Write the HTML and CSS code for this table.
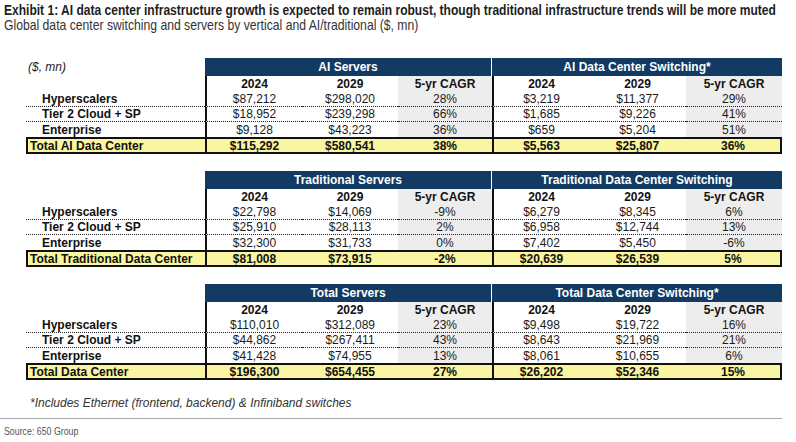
FILE: index.html
```html
<!DOCTYPE html>
<html>
<head>
<meta charset="utf-8">
<link rel="stylesheet" href="styles.css">
</head>
<body>
<div class="page">
  <div class="title">Exhibit 1: AI data center infrastructure growth is expected to remain robust, though traditional infrastructure trends will be more muted</div>
  <div class="subtitle">Global data center switching and servers by vertical and AI/traditional ($, mn)</div>

  <div class="tables">
    <div class="tbl">
      <div class="unit">($, mn)</div>
      <div class="hd hd1">AI Servers</div>
      <div class="hd hd2">AI Data Center Switching*</div>

      <div class="yr lab"></div>
      <div class="yr sep">2024</div><div class="yr">2029</div><div class="yr g">5-yr CAGR</div>
      <div class="yr sep">2024</div><div class="yr">2029</div><div class="yr g">5-yr CAGR</div>

      <div class="row dot lab">Hyperscalers</div>
      <div class="row dot sep">$87,212</div><div class="row dot">$298,020</div><div class="row dot g">28%</div>
      <div class="row dot sep">$3,219</div><div class="row dot">$11,377</div><div class="row dot g">29%</div>

      <div class="row dot lab sm">Tier 2 Cloud + SP</div>
      <div class="row dot sep sm">$18,952</div><div class="row dot sm">$239,298</div><div class="row dot g sm">66%</div>
      <div class="row dot sep sm">$1,685</div><div class="row dot sm">$9,226</div><div class="row dot g sm">41%</div>

      <div class="row lab">Enterprise</div>
      <div class="row sep">$9,128</div><div class="row">$43,223</div><div class="row g">36%</div>
      <div class="row sep">$659</div><div class="row">$5,204</div><div class="row g">51%</div>

      <div class="tot first">Total AI Data Center</div>
      <div class="tot sep">$115,292</div><div class="tot">$580,541</div><div class="tot">38%</div>
      <div class="tot sep">$5,563</div><div class="tot">$25,807</div><div class="tot last">36%</div>
    </div>

    <div class="tbl">
      <div class="unit"></div>
      <div class="hd hd1">Traditional Servers</div>
      <div class="hd hd2">Traditional Data Center Switching</div>

      <div class="yr lab"></div>
      <div class="yr sep">2024</div><div class="yr">2029</div><div class="yr g">5-yr CAGR</div>
      <div class="yr sep">2024</div><div class="yr">2029</div><div class="yr g">5-yr CAGR</div>

      <div class="row dot lab">Hyperscalers</div>
      <div class="row dot sep">$22,798</div><div class="row dot">$14,069</div><div class="row dot g">-9%</div>
      <div class="row dot sep">$6,279</div><div class="row dot">$8,345</div><div class="row dot g">6%</div>

      <div class="row dot lab sm">Tier 2 Cloud + SP</div>
      <div class="row dot sep sm">$25,910</div><div class="row dot sm">$28,113</div><div class="row dot g sm">2%</div>
      <div class="row dot sep sm">$6,958</div><div class="row dot sm">$12,744</div><div class="row dot g sm">13%</div>

      <div class="row lab">Enterprise</div>
      <div class="row sep">$32,300</div><div class="row">$31,733</div><div class="row g">0%</div>
      <div class="row sep">$7,402</div><div class="row">$5,450</div><div class="row g">-6%</div>

      <div class="tot first">Total Traditional Data Center</div>
      <div class="tot sep">$81,008</div><div class="tot">$73,915</div><div class="tot">-2%</div>
      <div class="tot sep">$20,639</div><div class="tot">$26,539</div><div class="tot last">5%</div>
    </div>

    <div class="tbl">
      <div class="unit"></div>
      <div class="hd hd1">Total Servers</div>
      <div class="hd hd2">Total Data Center Switching*</div>

      <div class="yr lab"></div>
      <div class="yr sep">2024</div><div class="yr">2029</div><div class="yr g">5-yr CAGR</div>
      <div class="yr sep">2024</div><div class="yr">2029</div><div class="yr g">5-yr CAGR</div>

      <div class="row dot lab">Hyperscalers</div>
      <div class="row dot sep">$110,010</div><div class="row dot">$312,089</div><div class="row dot g">23%</div>
      <div class="row dot sep">$9,498</div><div class="row dot">$19,722</div><div class="row dot g">16%</div>

      <div class="row dot lab sm">Tier 2 Cloud + SP</div>
      <div class="row dot sep sm">$44,862</div><div class="row dot sm">$267,411</div><div class="row dot g sm">43%</div>
      <div class="row dot sep sm">$8,643</div><div class="row dot sm">$21,969</div><div class="row dot g sm">21%</div>

      <div class="row lab">Enterprise</div>
      <div class="row sep">$41,428</div><div class="row">$74,955</div><div class="row g">13%</div>
      <div class="row sep">$8,061</div><div class="row">$10,655</div><div class="row g">6%</div>

      <div class="tot first">Total Data Center</div>
      <div class="tot sep">$196,300</div><div class="tot">$654,455</div><div class="tot">27%</div>
      <div class="tot sep">$26,202</div><div class="tot">$52,346</div><div class="tot last">15%</div>
    </div>
  </div>

  <div class="note">*Includes Ethernet (frontend, backend) &amp; Infiniband switches</div>
  <div class="rule"></div>
  <div class="source">Source: 650 Group</div>
</div>
</body>
</html>
```

FILE: styles.css
```css
html, body {
  margin: 0;
  padding: 0;
  background: #ffffff;
}

.page {
  width: 796px;
  height: 442px;
  overflow: hidden;
  font-family: "Liberation Sans", Arial, sans-serif;
  color: #222;
}

.title {
  margin-top: 3px;
  margin-left: 4px;
  font-family: "Liberation Sans", Arial, sans-serif;
  font-weight: bold;
  font-size: 14.5px;
  line-height: 15px;
  color: #1e1e1e;
  white-space: nowrap;
  transform: scaleX(0.83);
  transform-origin: 0 0;
}

.subtitle {
  margin-left: 4px;
  font-family: "Liberation Sans", Arial, sans-serif;
  font-size: 14.5px;
  line-height: 15px;
  color: #333;
  white-space: nowrap;
  transform: scaleX(0.84);
  transform-origin: 0 0;
}

.tables {
  margin-top: 25px;
  margin-left: 26px;
  display: flex;
  flex-direction: column;
  gap: 17px;
}

.tbl {
  display: grid;
  grid-template-columns: 179px 97px 96px 94px 97px 97px 96px;
  grid-template-rows: 18px 15px 16px 15px 15px 17px;
  width: 756px;
  font-size: 12px;
}

.tbl > div {
  box-sizing: border-box;
  display: flex;
  align-items: center;
  justify-content: center;
  white-space: nowrap;
  color: #1a1a1a;
}

.unit {
  justify-content: flex-start !important;
  padding-left: 2px;
  font-style: italic;
}

.hd {
  background: #123a63;
  color: #ffffff !important;
  font-weight: bold;
}

.hd1 {
  grid-column: 2 / span 3;
  border-right: 1px solid #ffffff;
}

.hd2 {
  grid-column: 5 / span 3;
}

.yr {
  font-weight: bold;
  color: #111 !important;
}

.lab {
  justify-content: flex-start !important;
  padding-left: 16px;
  font-weight: bold;
  color: #111 !important;
}

.sep {
  border-left: 2px solid #111;
}

.g {
  background: #ededed;
}

.dot {
  border-bottom: 1px dotted #222;
}

.tot {
  background: #f9f5a1;
  border-top: 2px solid #111;
  border-bottom: 2px solid #111;
  font-weight: bold;
  color: #111 !important;
}

.tot.first {
  justify-content: flex-start;
  border-left: 2px solid #111;
  padding-left: 2px;
}

.tot.last {
  border-right: 2px solid #111;
}

.note {
  margin-top: 16px;
  padding-left: 30px;
  font-style: italic;
  font-size: 12px;
  line-height: 14px;
  color: #333;
}

.rule {
  margin-top: 8px;
  width: 782px;
  height: 1px;
  background: #aaaaaa;
}

.source {
  margin-top: 5px;
  margin-left: 4px;
  font-family: "Liberation Sans", Arial, sans-serif;
  font-size: 11px;
  line-height: 14px;
  color: #555;
  white-space: nowrap;
  transform: scaleX(0.8);
  transform-origin: 0 0;
}
```
